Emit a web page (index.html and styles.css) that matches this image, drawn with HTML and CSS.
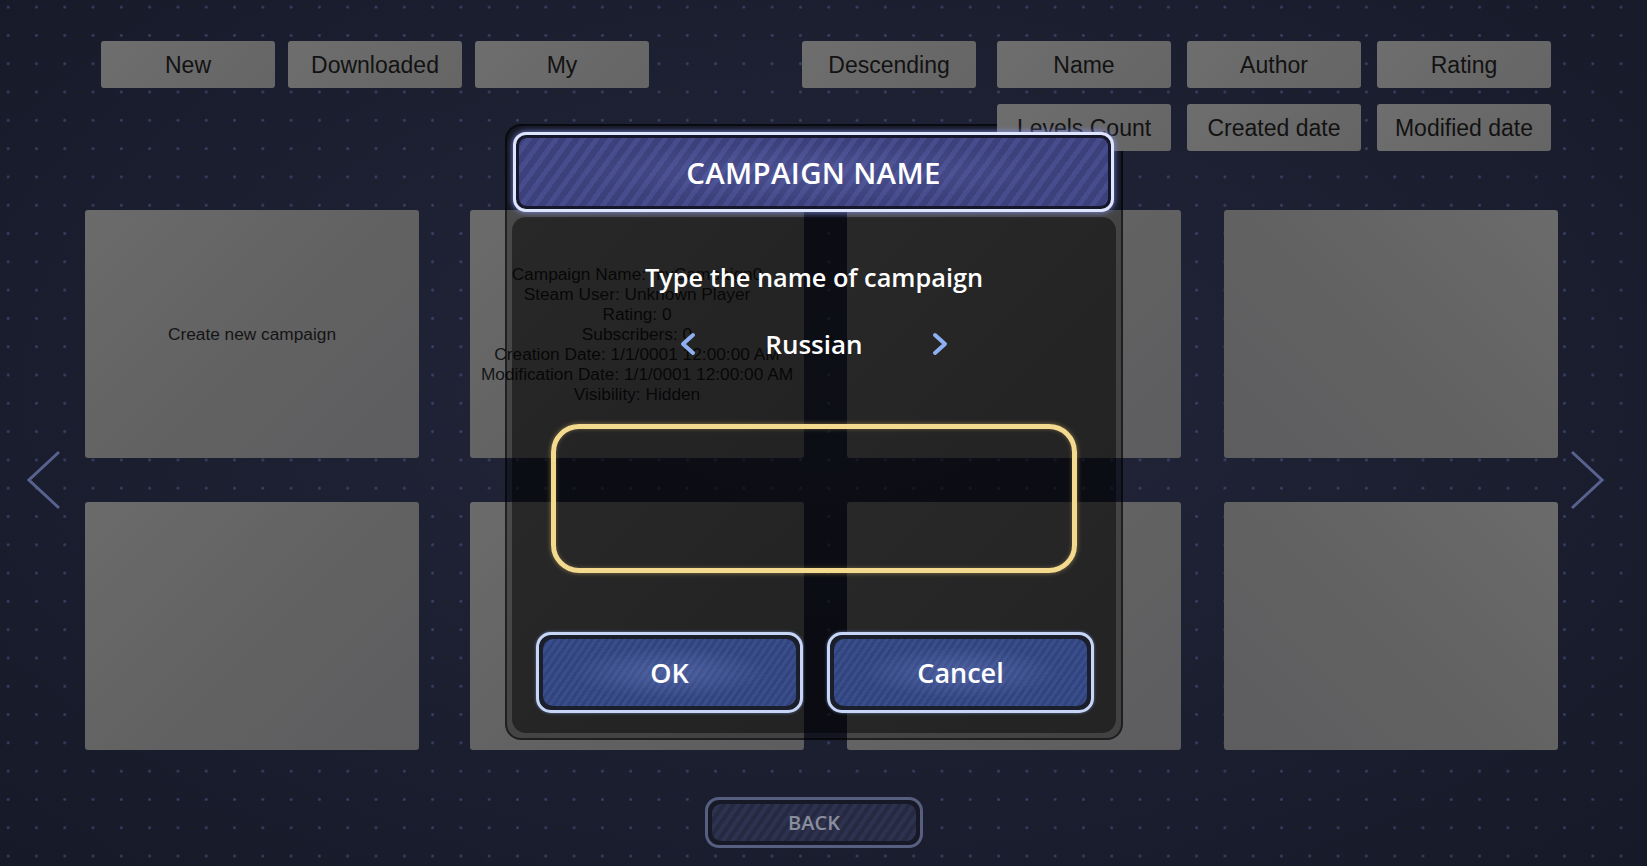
FILE: index.html
```html
<!DOCTYPE html>
<html lang="en">
<head>
<meta charset="utf-8"/>
<title>Campaigns</title>
<link rel="stylesheet" href="styles.css">
</head>
<body>
<div class="screen">
<!-- Filter and sort tabs -->
<div class="toolbar">
<div class="filters">
<button class="tab">New</button>
<button class="tab">Downloaded</button>
<button class="tab">My</button>
</div>
<button class="tab order">Descending</button>
<div class="sorts">
<button class="tab">Name</button>
<button class="tab">Author</button>
<button class="tab">Rating</button>
<button class="tab">Levels Count</button>
<button class="tab">Created date</button>
<button class="tab">Modified date</button>
</div>
</div>

<!-- Campaign pages -->
<div class="browser">
<svg class="nav-arrow" width="34" height="60" viewBox="0 0 34 60"><polyline points="32,2 2,30 32,58"/></svg>
<div class="cards">
<div class="card">Create new campaign</div>
<div class="card info">
<span>Campaign Name: myCampaign0</span>
<span>Steam User: Unknown Player</span>
<span>Rating: 0</span>
<span>Subscribers: 0</span>
<span>Creation Date: 1/1/0001 12:00:00 AM</span>
<span>Modification Date: 1/1/0001 12:00:00 AM</span>
<span>Visibility: Hidden</span>
</div>
<div class="card"></div>
<div class="card"></div>
<div class="card"></div>
<div class="card"></div>
<div class="card"></div>
<div class="card"></div>
</div>
<svg class="nav-arrow next" width="34" height="60" viewBox="0 0 34 60"><polyline points="2,2 32,30 2,58"/></svg>
</div>

<div class="footer">
<button class="back"><span>BACK</span></button>
</div>
</div>

<!-- Campaign name popup -->
<div class="dialog">
<div class="dialog-title"><div class="title-fill">CAMPAIGN NAME</div></div>
<div class="dialog-body">
<p class="prompt">Type the name of campaign</p>
<div class="lang">
<svg width="20" height="24" viewBox="0 0 20 24"><polyline points="15,3 5,12 15,21"/></svg>
<span>Russian</span>
<svg width="20" height="24" viewBox="0 0 20 24"><polyline points="5,3 15,12 5,21"/></svg>
</div>
<div class="name-input"></div>
<div class="actions">
<button class="action"><span>OK</span></button>
<button class="action"><span>Cancel</span></button>
</div>
</div>
</div>
</body>
</html>
```

FILE: styles.css
```css
html, body {
  margin: 0;
  padding: 0;
}

body {
  height: 866px;
  overflow: hidden;
  background-color: #1b1e2e;
  background-image:
    radial-gradient(circle, rgba(88, 104, 160, 0.45) 0, rgba(88, 104, 160, 0.45) 1px, transparent 1.8px),
    radial-gradient(ellipse at 50% 45%, #23273b 0%, #1c1f30 55%, #161927 100%);
  background-size: 28.3px 28.3px, 100% 100%;
  background-position: -6px -7px, 0 0;
  font-family: "Liberation Sans", Arial, sans-serif;
}

button {
  margin: 0;
  padding: 0;
  border: none;
  font: inherit;
  cursor: pointer;
}

/* ---- toolbar ---- */
.toolbar {
  display: flex;
  align-items: flex-start;
  padding: 41px 0 0 101px;
}

.filters {
  display: flex;
  gap: 13px;
}

.tab {
  position: relative;
  z-index: 2;
  width: 174px;
  height: 47px;
  border-radius: 3px;
  background: linear-gradient(135deg, #6e6e6e, #656565);
  color: #121212;
  font-size: 23px;
  padding-top: 2px;
}

.order {
  margin-left: 153px;
}

.sorts {
  margin-left: 21px;
  display: grid;
  grid-template-columns: repeat(3, 174px);
  gap: 16px;
}

/* ---- cards ---- */
.browser {
  display: flex;
  align-items: center;
  margin-top: 59px;
  padding-left: 27px;
}

.nav-arrow polyline {
  fill: none;
  stroke: #58628e;
  stroke-width: 3;
}

.nav-arrow.next {
  margin-left: 12px;
}

.cards {
  margin-left: 24px;
  display: grid;
  grid-template-columns: repeat(4, auto);
  column-gap: 43px;
  row-gap: 44px;
}

.card {
  width: 334px;
  height: 248px;
  border-radius: 3px;
  background: linear-gradient(135deg, #6b6b6b 0%, #626263 50%, #5d5d5f 100%);
  display: flex;
  align-items: center;
  justify-content: center;
  color: #141414;
  font-size: 17.3px;
}

.card:nth-child(4n+1) {
  margin-right: 8px;
}

.card:nth-child(4n) {
  background: linear-gradient(225deg, #6b6b6b 0%, #626263 50%, #5d5d5f 100%);
}

.card.info {
  flex-direction: column;
  line-height: 20px;
}

/* ---- back ---- */
.footer {
  margin-top: 47px;
  padding-left: 705px;
}

.back {
  width: 218px;
  height: 51px;
  box-sizing: border-box;
  border: 3px solid #565f80;
  border-radius: 14px;
  padding: 4px;
  background: #171a26;
}

.back span {
  display: flex;
  height: 100%;
  align-items: center;
  justify-content: center;
  border-radius: 9px;
  background: repeating-linear-gradient(125deg, #262a40 0 4px, #2d3250 4px 8px);
  color: #8a8e9c;
  font-family: "Open Sans", sans-serif;
  font-weight: 600;
  font-size: 20px;
}

/* ---- dialog ---- */
.dialog {
  position: absolute;
  left: 505px;
  top: 124px;
  width: 618px;
  height: 616px;
  box-sizing: border-box;
  border: 2px solid rgba(0, 0, 0, 0.55);
  border-radius: 16px;
  padding: 5px;
  background: rgba(0, 0, 0, 0.3);
  font-family: "Open Sans", sans-serif;
  color: #fff;
}

.dialog-title {
  position: relative;
  z-index: 3;
  width: 601px;
  height: 80px;
  margin: 1px 0 0 1px;
  box-sizing: border-box;
  border: 3px solid #dfe5ff;
  border-radius: 13px;
  padding: 3px;
  background: #15172a;
  box-shadow: 0 0 6px rgba(140, 155, 255, 0.85);
}

.title-fill {
  height: 100%;
  border-radius: 8px;
  display: flex;
  align-items: center;
  justify-content: center;
  background:
    radial-gradient(ellipse at 50% 50%, rgba(120, 130, 210, 0.25), transparent 60%),
    repeating-linear-gradient(126deg, #3c407b 0 6px, #474c8c 6px 11px);
  font-size: 29.5px;
  font-weight: 600;
  letter-spacing: 0.3px;
}

.dialog-body {
  margin-top: 5px;
  height: 516px;
  box-sizing: border-box;
  border-radius: 14px;
  background: rgba(0, 0, 0, 0.45);
  display: flex;
  flex-direction: column;
  align-items: center;
  padding-top: 43px;
}

.prompt {
  margin: 0;
  font-size: 25.3px;
  line-height: 34px;
  font-weight: 600;
}

.lang {
  margin-top: 32px;
  height: 36px;
  display: flex;
  align-items: center;
}

.lang span {
  width: 232px;
  text-align: center;
  font-size: 26px;
  font-weight: 600;
}

.lang polyline {
  fill: none;
  stroke: #8fb0f0;
  stroke-width: 4;
  stroke-linecap: round;
  stroke-linejoin: round;
}

.name-input {
  margin-top: 62px;
  width: 526px;
  height: 149px;
  box-sizing: border-box;
  border: 5px solid #f4da8e;
  border-radius: 28px;
  box-shadow: 0 0 5px rgba(255, 214, 120, 0.45), inset 0 0 4px rgba(255, 214, 120, 0.3);
}

.actions {
  margin-top: 59px;
  align-self: stretch;
  display: flex;
  gap: 24px;
  padding-left: 24px;
}

.action {
  width: 267px;
  height: 81px;
  box-sizing: border-box;
  border: 3px solid #c7d6f6;
  border-radius: 15px;
  padding: 4px;
  background: #1b1e2b;
  box-shadow: 0 0 3px rgba(150, 180, 255, 0.6);
}

.action span {
  display: flex;
  height: 100%;
  align-items: center;
  justify-content: center;
  border-radius: 10px;
  background:
    radial-gradient(ellipse at 50% 50%, rgba(130, 150, 220, 0.3), transparent 55%),
    repeating-linear-gradient(125deg, #3a4e8c 0 3px, #32447d 3px 6px);
  color: #fff;
  font-family: "Open Sans", sans-serif;
  font-size: 27px;
  font-weight: 600;
}
```
